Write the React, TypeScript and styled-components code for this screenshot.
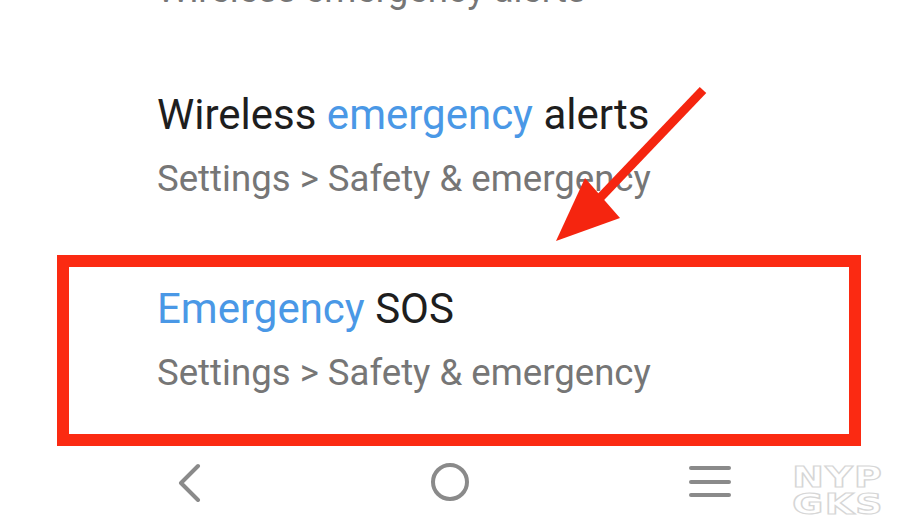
import styled, { createGlobalStyle } from 'styled-components';

const GlobalStyle = createGlobalStyle`
  html, body {
    margin: 0;
    padding: 0;
    background: #ffffff;
  }
`;

const Screen = styled.div`
  position: relative;
  width: 900px;
  height: 529px;
  overflow: hidden;
  display: flex;
  flex-direction: column;
  background: #ffffff;
  font-family: Roboto, 'Noto Sans', sans-serif;
`;

const ResultList = styled.div`
  display: flex;
  flex-direction: column;
  margin-top: -123px;
`;

const ResultItem = styled.div<{ $highlighted?: boolean }>`
  display: flex;
  flex-direction: column;
  gap: 16px;
  padding: ${(p) => (p.$highlighted ? '18px 0 37px 88px' : '25px 0 52px 157px')};
  margin: ${(p) => (p.$highlighted ? '0 39px 0 57px' : '0')};
  border: ${(p) => (p.$highlighted ? '12px solid #fb2a12' : 'none')};
`;

const Title = styled.div`
  font-size: 42px;
  line-height: 48px;
  color: #1e1e1e;
  white-space: nowrap;
`;

const Match = styled.span`
  color: #4a98e6;
`;

const Path = styled.div`
  font-size: 36.6px;
  line-height: 48px;
  color: #767676;
  white-space: nowrap;
`;

const NavBar = styled.div`
  display: grid;
  grid-template-columns: repeat(3, 1fr);
  align-items: center;
  justify-items: center;
  height: 72px;
  padding: 0 60px;
`;

const NavButton = styled.div`
  display: flex;
  align-items: center;
  justify-content: center;
  color: #8a8a8a;
`;

const Arrow = styled.svg`
  position: absolute;
  left: 0;
  top: 0;
  pointer-events: none;
`;

const Watermark = styled.div`
  position: absolute;
  right: 16px;
  bottom: 12px;
  display: flex;
  flex-direction: column;
  gap: 3px;
  transform: scaleX(1.35);
  transform-origin: right bottom;
`;

const WatermarkLine = styled.div`
  font-family: 'DejaVu Sans', sans-serif;
  font-weight: bold;
  font-size: 28px;
  line-height: 24px;
  height: 24px;
  letter-spacing: 1px;
  color: #ffffff;
  -webkit-text-stroke: 1.2px #d6d6d6;
`;

const results = [
  { title: null, path: 'Wireless emergency alerts' },
  {
    title: (
      <>
        Wireless <Match>emergency</Match> alerts
      </>
    ),
    path: 'Settings > Safety & emergency',
  },
];

export default function App() {
  return (
    <Screen>
      <GlobalStyle />
      <ResultList>
        {results.map((r, i) => (
          <ResultItem key={i}>
            <Title>{r.title ?? '\u00a0'}</Title>
            <Path>{r.path}</Path>
          </ResultItem>
        ))}
        <ResultItem $highlighted>
          <Title>
            <Match>Emergency</Match> SOS
          </Title>
          <Path>Settings &gt; Safety &amp; emergency</Path>
        </ResultItem>
      </ResultList>

      <NavBar>
        <NavButton>
          <svg width="30" height="40" viewBox="0 0 30 40">
            <polyline
              points="23,4 6,21 23,38"
              fill="none"
              stroke="currentColor"
              strokeWidth="4"
              strokeLinecap="round"
              strokeLinejoin="round"
            />
          </svg>
        </NavButton>
        <NavButton>
          <svg width="40" height="40" viewBox="0 0 40 40">
            <circle cx="20" cy="20" r="17" fill="none" stroke="currentColor" strokeWidth="4" />
          </svg>
        </NavButton>
        <NavButton>
          <svg width="42" height="36" viewBox="0 0 42 36">
            <g stroke="currentColor" strokeWidth="4" strokeLinecap="round">
              <line x1="2" y1="4" x2="40" y2="4" />
              <line x1="2" y1="18" x2="40" y2="18" />
              <line x1="2" y1="31" x2="40" y2="31" />
            </g>
          </svg>
        </NavButton>
      </NavBar>

      <Arrow width="900" height="529" viewBox="0 0 900 529">
        <line x1="703" y1="90" x2="598" y2="200" stroke="#f5250f" strokeWidth="9" />
        <polygon points="556,241 585,178 620,218" fill="#f5250f" />
      </Arrow>

      <Watermark>
        <WatermarkLine>NYP</WatermarkLine>
        <WatermarkLine>GKS</WatermarkLine>
      </Watermark>
    </Screen>
  );
}
